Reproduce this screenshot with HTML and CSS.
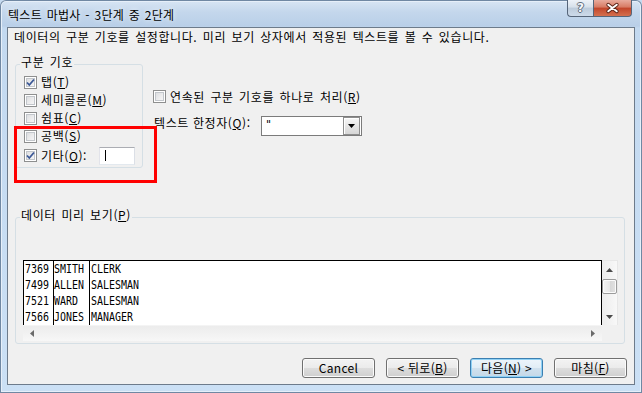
FILE: index.html
```html
<!DOCTYPE html>
<html lang="ko">
<head>
<meta charset="utf-8">
<title>텍스트 마법사</title>
<link rel="stylesheet" href="styles.css">
</head>
<body>
<div class="window">
  <div class="titlebar">
    <span class="title">텍스트 마법사 - 3단계 중 2단계</span>
    <div class="caps">
      <div class="cap help"><span>?</span></div>
      <div class="cap close">
        <svg width="39" height="17" viewBox="0 0 39 17">
          <path d="M15 4.5 L24 11.5 M24 4.5 L15 11.5" stroke="#5a2418" stroke-width="4" stroke-linecap="round"/>
          <path d="M15 4.5 L24 11.5 M24 4.5 L15 11.5" stroke="#ffffff" stroke-width="2" stroke-linecap="round"/>
        </svg>
      </div>
    </div>
  </div>
  <div class="client">
    <p class="desc">데이터의 구분 기호를 설정합니다. 미리 보기 상자에서 적용된 텍스트를 볼 수 있습니다.</p>
    <div class="options">
      <fieldset class="group delims">
        <legend>구분 기호</legend>
        <div class="chk"><span class="box checked"><svg width="9" height="9" viewBox="0 0 9 9"><path d="M1 4.5 L3.3 7 L8 1.5" fill="none" stroke="#3b5896" stroke-width="1.8"/></svg></span><span>탭(<u>T</u>)</span></div>
        <div class="chk"><span class="box"></span><span>세미콜론(<u>M</u>)</span></div>
        <div class="chk"><span class="box"></span><span>쉼표(<u>C</u>)</span></div>
        <div class="chk"><span class="box"></span><span>공백(<u>S</u>)</span></div>
        <div class="chk other"><span class="box checked"><svg width="9" height="9" viewBox="0 0 9 9"><path d="M1 4.5 L3.3 7 L8 1.5" fill="none" stroke="#3b5896" stroke-width="1.8"/></svg></span><span>기타(<u>O</u>):</span><span class="edit"><span class="caret"></span></span></div>
      </fieldset>
      <div class="right">
        <div class="chk"><span class="box"></span><span>연속된 구분 기호를 하나로 처리(<u>R</u>)</span></div>
        <div class="qualifier">
          <span class="qlabel">텍스트 한정자(<u>Q</u>):</span>
          <div class="combo">
            <span class="val">"</span>
            <span class="drop"><svg width="7" height="4" viewBox="0 0 7 4"><path d="M0 0 H7 L3.5 4 Z" fill="#000"/></svg></span>
          </div>
        </div>
      </div>
      <div class="highlight"></div>
    </div>
    <fieldset class="group preview">
      <legend>데이터 미리 보기(<u>P</u>)</legend>
      <div class="pv">
        <div class="pv-data">
          <div class="col c1"><div class="t">7369
7499
7521
7566</div></div>
          <div class="col c2"><div class="t">SMITH
ALLEN
WARD
JONES</div></div>
          <div class="col c3"><div class="t">CLERK
SALESMAN
SALESMAN
MANAGER</div></div>
        </div>
        <div class="vscroll">
          <span class="arr"><svg width="7" height="4" viewBox="0 0 7 4"><path d="M0 4 H7 L3.5 0 Z" fill="#4a4a4a"/></svg></span>
          <span class="thumb"></span>
          <span></span>
          <span class="arr"><svg width="7" height="4" viewBox="0 0 7 4"><path d="M0 0 H7 L3.5 4 Z" fill="#4a4a4a"/></svg></span>
        </div>
        <div class="hscroll">
          <span class="arr"><svg width="4" height="7" viewBox="0 0 4 7"><path d="M4 0 V7 L0 3.5 Z" fill="#6a6a6a"/></svg></span>
          <span></span>
          <span class="arr"><svg width="4" height="7" viewBox="0 0 4 7"><path d="M0 0 V7 L4 3.5 Z" fill="#6a6a6a"/></svg></span>
        </div>
        <div class="corner"></div>
      </div>
    </fieldset>
    <div class="buttons">
      <button class="btn">Cancel</button>
      <button class="btn">&lt; 뒤로(<u>B</u>)</button>
      <button class="btn default">다음(<u>N</u>) &gt;</button>
      <button class="btn">마침(<u>F</u>)</button>
    </div>
  </div>
</div>
</body>
</html>
```
FILE: styles.css
```css
* { box-sizing: border-box; }
html, body { margin: 0; padding: 0; }
body {
  width: 642px;
  height: 393px;
  overflow: hidden;
  font-family: "Noto Sans CJK KR", "Liberation Sans", sans-serif;
  font-size: 12px;
  color: #000;
  background: #c6dbf1;
}
u { text-decoration: underline; text-underline-offset: 1px; }

.window {
  width: 642px;
  height: 393px;
  display: flex;
  flex-direction: column;
  padding: 0 7px 8px;
  border-radius: 6px 6px 0 0;
  background: linear-gradient(180deg, #d9e6f4 0px, #c4d7ec 12px, #b9cfe8 26px, #c3d9f0 28px, #cbe0f5 100%);
  box-shadow: inset 0 0 0 1px #7088a3, inset 0 0 0 2px #e6eff9;
}

.titlebar {
  height: 27px;
  flex: none;
  margin: 0 -7px;
  padding: 0 10px 0 8px;
  display: flex;
  justify-content: space-between;
  align-items: flex-start;
}
.title {
  margin-top: 9px;
  line-height: 12px;
  word-spacing: 1px;
  letter-spacing: 0.3px;
  text-shadow: 0 0 5px rgba(255,255,255,0.95);
}
.caps { display: flex; }
.cap {
  height: 17px;
  border: 1px solid #566579;
  border-top: none;
  display: flex;
  align-items: center;
  justify-content: center;
}
.help {
  width: 26px;
  border-right: none;
  border-radius: 0 0 0 4px;
  background: linear-gradient(180deg, #edf2f8 0%, #d6e0ea 45%, #bccbdb 50%, #cddaea 100%);
}
.help span {
  font-family: "DejaVu Sans", sans-serif;
  font-weight: bold;
  font-size: 12px;
  line-height: 14px;
  color: #f4f7fb;
  text-shadow: 1px 0 0 #5f6d7c, -1px 0 0 #5f6d7c, 0 1px 0 #5f6d7c, 0 -1px 0 #5f6d7c;
}
.close {
  width: 39px;
  border-radius: 0 0 4px 0;
  background: linear-gradient(180deg, #e8ab9d 0%, #d77a63 45%, #c2452a 50%, #d4704f 100%);
}
.close svg { display: block; }

.client {
  flex: 1;
  border: 1px solid #6d7b8b;
  background: #f0f0f0;
  display: flex;
  flex-direction: column;
  letter-spacing: 0.6px;
}

.desc {
  margin: 2px 0 0 6px;
  line-height: 14px;
  word-spacing: 1.5px;
}

.options {
  position: relative;
  display: flex;
  align-items: flex-start;
  margin-top: 12px;
}

fieldset.group {
  margin: 0;
  min-width: 0;
  border: 1px solid #d5dfe5;
  border-radius: 3px;
}
fieldset.group legend {
  padding: 0 1px 4px;
  line-height: 12px;
  word-spacing: 1.5px;
}

.delims {
  width: 128px;
  margin-left: 7px !important;
  padding: 1px 7px 1px 8px;
}
.delims legend { margin-left: -4px; }

.chk {
  display: flex;
  align-items: center;
  height: 18px;
  line-height: 12px;
  word-spacing: 1.5px;
}
.chk.other { height: 21px; }

.box {
  flex: none;
  width: 13px;
  height: 13px;
  margin-right: 4px;
  border: 1px solid #8e8f8f;
  background: linear-gradient(135deg, #d6d8db 0%, #eeeeef 60%, #fafafa 100%);
  box-shadow: inset 0 0 0 1px #ffffff, inset 0 0 0 2px #c2c6cb;
  display: flex;
  align-items: center;
  justify-content: center;
}
.box svg { display: block; }

.edit {
  margin-left: auto;
  width: 36px;
  height: 18px;
  background: #fff;
  border: 1px solid;
  border-color: #abadb3 #dbdfe6 #e3e9ef #e2e3ea;
  display: flex;
  align-items: center;
  padding-left: 5px;
}
.caret { width: 1px; height: 11px; background: #000; }

.right {
  margin-left: 10px;
  padding-top: 33px;
  display: flex;
  flex-direction: column;
}
.right .chk { height: 15px; }

.qualifier {
  display: flex;
  align-items: flex-start;
  margin-top: 12px;
}
.qlabel {
  width: 108px;
  padding: 1px 0 0 1px;
  line-height: 12px;
}
.combo {
  width: 101px;
  height: 20px;
  border: 1px solid #7b7b7b;
  background: #fff;
  display: flex;
  justify-content: space-between;
  padding: 0 1px 0 4px;
}
.combo .val {
  font-family: "DejaVu Sans", sans-serif;
  line-height: 16px;
  font-size: 11px;
}
.drop {
  width: 17px;
  height: 18px;
  border: 1px solid #8d8d8d;
  background: linear-gradient(180deg, #f7f7f7 0%, #e6e6e6 50%, #d6d6d6 100%);
  box-shadow: inset 1px 1px 0 #ffffff;
  display: flex;
  align-items: center;
  justify-content: center;
}

.highlight {
  position: absolute;
  left: 6px;
  top: 70px;
  width: 143px;
  height: 57px;
  border: 3px solid #ff0000;
}

.preview {
  width: 610px;
  margin: 41px 0 0 7px !important;
  padding: 35px 6px 2px 7px;
}
.preview legend { margin-left: -3px; }

.pv {
  display: grid;
  grid-template-columns: 579px 16px;
  grid-template-rows: 65px 16px;
}
.pv-data {
  border: 1px solid #000;
  border-bottom: none;
  background: #fff;
  display: flex;
  overflow: hidden;
  font-family: "DejaVu Sans Mono", monospace;
  font-size: 13px;
  line-height: 16px;
  letter-spacing: 0;
}
.col {
  flex: none;
  border-right: 1px solid #000;
  padding-left: 1px;
  overflow: hidden;
}
.c1 { width: 30px; }
.c2 { width: 36px; padding-left: 0; }
.c3 { flex: 1; border-right: none; }
.col .t {
  white-space: pre;
  transform: scaleX(0.766);
  transform-origin: 0 0;
}

.vscroll {
  display: grid;
  grid-template-rows: 18px 15px 1fr 16px;
  background: linear-gradient(90deg, #ececec 0%, #f8f8f8 100%);
  border: 1px solid #e7e7e7;
  border-left: none;
  border-bottom: none;
}
.arr {
  display: flex;
  align-items: center;
  justify-content: center;
}
.arr svg { display: block; }
.thumb {
  border: 1px solid #9b9b9b;
  border-radius: 2px;
  background: linear-gradient(90deg, #f4f4f4 0%, #e8e8e8 50%, #d6d6d6 51%, #e2e2e2 100%);
  box-shadow: inset 0 0 0 1px #fbfbfb;
}
.hscroll {
  display: grid;
  grid-template-columns: 17px 1fr 18px;
  background: linear-gradient(180deg, #ececec 0%, #f7f7f7 100%);
  border-top: 1px solid #f4f4f4;
}
.corner { background: #f0f0f0; }

.buttons {
  display: flex;
  justify-content: flex-end;
  gap: 11px;
  margin-top: 14px;
  padding-right: 7px;
}
.btn {
  width: 73px;
  height: 20px;
  padding: 0;
  margin: 0;
  font-family: "Noto Sans CJK KR", "Liberation Sans", sans-serif;
  font-size: 12px;
  line-height: 16px;
  letter-spacing: 0.3px;
  color: #000;
  border: 1px solid #707070;
  border-radius: 3px;
  background: linear-gradient(180deg, #f3f3f3 0%, #ebebeb 50%, #dddddd 50%, #cfcfcf 100%);
  box-shadow: inset 0 0 0 1px #fbfbfb;
}
.btn.default {
  border-color: #3c7fb1;
  background: linear-gradient(180deg, #edf5fb 0%, #e1edf6 50%, #d0e1ee 50%, #c4d8e8 100%);
  box-shadow: inset 0 0 0 1px #8fd1f5;
}
```
